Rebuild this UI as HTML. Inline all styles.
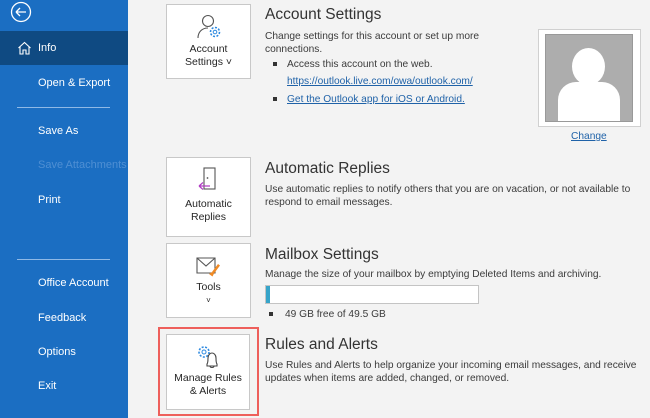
<!DOCTYPE html>
<html><head><meta charset="utf-8"><style>
*{margin:0;padding:0;box-sizing:border-box}
body{width:650px;height:418px;overflow:hidden;background:#f3f3f3;font-family:"Liberation Sans",sans-serif;position:relative;color:#262626}
.side{position:absolute;left:0;top:0;width:128px;height:418px;background:#1b6ec2}
.nav{position:absolute;left:38px;color:#fff;font-size:11px}
.sel{position:absolute;left:0;top:31px;width:128px;height:34px;background:#0f4a82}
.hr{position:absolute;left:17px;width:93px;height:1px;background:#8fb9e6}
.btn{position:absolute;background:#fff;border:1px solid #c8c8c8;text-align:center;font-size:10.5px;color:#262626;line-height:13px}
.a{position:absolute;font-size:10.2px;color:#3b3b3b;line-height:12.5px}
.h{position:absolute;font-size:15.5px;color:#333}
.lnk{color:#1f62a8;text-decoration:underline}
.b{display:inline-block;width:4px;height:4px;background:#333;margin-right:10px;vertical-align:middle;margin-left:8px}
</style></head><body>
<div class="side">
<svg style="position:absolute;left:10px;top:1px" width="22" height="22" viewBox="0 0 22 22"><circle cx="11" cy="11" r="9.5" fill="none" stroke="#fff" stroke-width="1.3"/><path d="M6 11h10M6 11l4-4M6 11l4 4" stroke="#fff" stroke-width="1.3" fill="none"/></svg>
<div class="sel"></div>
<svg style="position:absolute;left:17px;top:41px" width="15" height="14" viewBox="0 0 15 14"><path d="M1.5 7L7.5 1.5 13.5 7M3 5.8V13h3V9h3v4h3V5.8" fill="none" stroke="#fff" stroke-width="1.1"/></svg>
<div class="nav" style="top:42px">Info</div>
<div class="nav" style="top:77px">Open &amp; Export</div>
<div class="hr" style="top:107px"></div>
<div class="nav" style="top:125px">Save As</div>
<div class="nav" style="top:159px;color:#4f8fd3">Save Attachments</div>
<div class="nav" style="top:194px">Print</div>
<div class="hr" style="top:259px"></div>
<div class="nav" style="top:277px">Office Account</div>
<div class="nav" style="top:312px">Feedback</div>
<div class="nav" style="top:346px">Options</div>
<div class="nav" style="top:380px">Exit</div>
</div>

<div class="btn" style="left:166px;top:4px;width:85px;height:75px;padding-top:38px">Account<br>Settings ˅
<svg style="position:absolute;left:29px;top:9px" width="28" height="26" viewBox="0 0 28 26"><circle cx="12" cy="7" r="5.5" fill="none" stroke="#555" stroke-width="1.1"/><path d="M2 24c0-6 4-10 10-10" fill="none" stroke="#555" stroke-width="1.1"/><circle cx="19" cy="18" r="4.5" fill="none" stroke="#2e8ae0" stroke-width="1.6" stroke-dasharray="2 1.5"/><circle cx="19" cy="18" r="1.8" fill="none" stroke="#2e8ae0" stroke-width="1"/></svg></div>
<div class="h" style="left:265px;top:6px">Account Settings</div>
<div class="a" style="left:265px;top:31px">Change settings for this account or set up more<br>connections.</div>
<div class="a" style="left:265px;top:59px"><span class="b"></span>Access this account on the web.</div>
<div class="a" style="left:287px;top:76px"><span class="lnk">https://outlook.live.com/owa/outlook.com/</span></div>
<div class="a" style="left:265px;top:94px"><span class="b"></span><span class="lnk">Get the Outlook app for iOS or Android.</span></div>

<div style="position:absolute;left:538px;top:29px;width:103px;height:98px;background:#fff;border:1px solid #d0d0d0"></div>
<div style="position:absolute;left:545px;top:34px;width:88px;height:88px;background:#adadad;border:1px solid #999;overflow:hidden">
<div style="position:absolute;left:26px;top:13px;width:33px;height:37px;border-radius:50%;background:#fff"></div>
<div style="position:absolute;left:12px;top:47px;width:62px;height:50px;border-radius:18px 18px 0 0;background:#fff"></div></div>
<div class="a lnk" style="left:571px;top:131px">Change</div>

<div class="btn" style="left:166px;top:157px;width:85px;height:80px;padding-top:40px">Automatic<br>Replies
<svg style="position:absolute;left:28px;top:8px" width="26" height="28" viewBox="0 0 26 28"><rect x="9" y="2" width="11" height="21" fill="none" stroke="#555" stroke-width="1.1"/><circle cx="12.5" cy="12" r="0.9" fill="#555"/><path d="M4 20h11M4 20l4-3.5M4 20l4 3.5" stroke="#b13fc4" stroke-width="1.2" fill="none"/></svg></div>
<div class="h" style="left:265px;top:160px">Automatic Replies</div>
<div class="a" style="left:265px;top:184px">Use automatic replies to notify others that you are on vacation, or not available to<br>respond to email messages.</div>

<div class="btn" style="left:166px;top:243px;width:85px;height:75px;padding-top:37px">Tools<br><span style="font-size:8px">˅</span>
<svg style="position:absolute;left:28px;top:10px" width="28" height="24" viewBox="0 0 28 24"><path d="M2 4h18v15H2z" fill="none" stroke="#555" stroke-width="1.1"/><path d="M2 4l9 8 9-8" fill="none" stroke="#555" stroke-width="1.1"/><path d="M17 18l6-8 2 1.5-6 8z" fill="#f08a24"/><path d="M14 20l3-2 2 1.5-1.5 3z" fill="#f08a24"/></svg></div>
<div class="h" style="left:265px;top:246px">Mailbox Settings</div>
<div class="a" style="left:265px;top:269px">Manage the size of your mailbox by emptying Deleted Items and archiving.</div>
<div style="position:absolute;left:265px;top:285px;width:214px;height:19px;background:#fff;border:1px solid #c4c4c4"><div style="width:4px;height:17px;background:#36a4c9"></div></div>
<div class="a" style="left:265px;top:309px"><span class="b" style="margin-left:4px;margin-right:12px"></span>49 GB free of 49.5 GB</div>

<div style="position:absolute;left:158px;top:327px;width:101px;height:89px;border:2px solid #ee5f5b"></div>
<div class="btn" style="left:166px;top:334px;width:84px;height:76px;padding-top:37px">Manage Rules<br>&amp; Alerts
<svg style="position:absolute;left:28px;top:9px" width="28" height="26" viewBox="0 0 28 26"><circle cx="9" cy="8" r="5" fill="none" stroke="#2e8ae0" stroke-width="1.6" stroke-dasharray="2 1.5"/><circle cx="9" cy="8" r="2" fill="none" stroke="#2e8ae0" stroke-width="1"/><path d="M12 22v-2c1-1 1-3 1-6 0-3 2-5 4-5s4 2 4 5c0 3 0 5 1 6v2zM15 22c0 2 4 2 4 0" fill="none" stroke="#444" stroke-width="1.1"/></svg></div>
<div class="h" style="left:265px;top:336px">Rules and Alerts</div>
<div class="a" style="left:265px;top:360px">Use Rules and Alerts to help organize your incoming email messages, and receive<br>updates when items are added, changed, or removed.</div>
</body></html>
